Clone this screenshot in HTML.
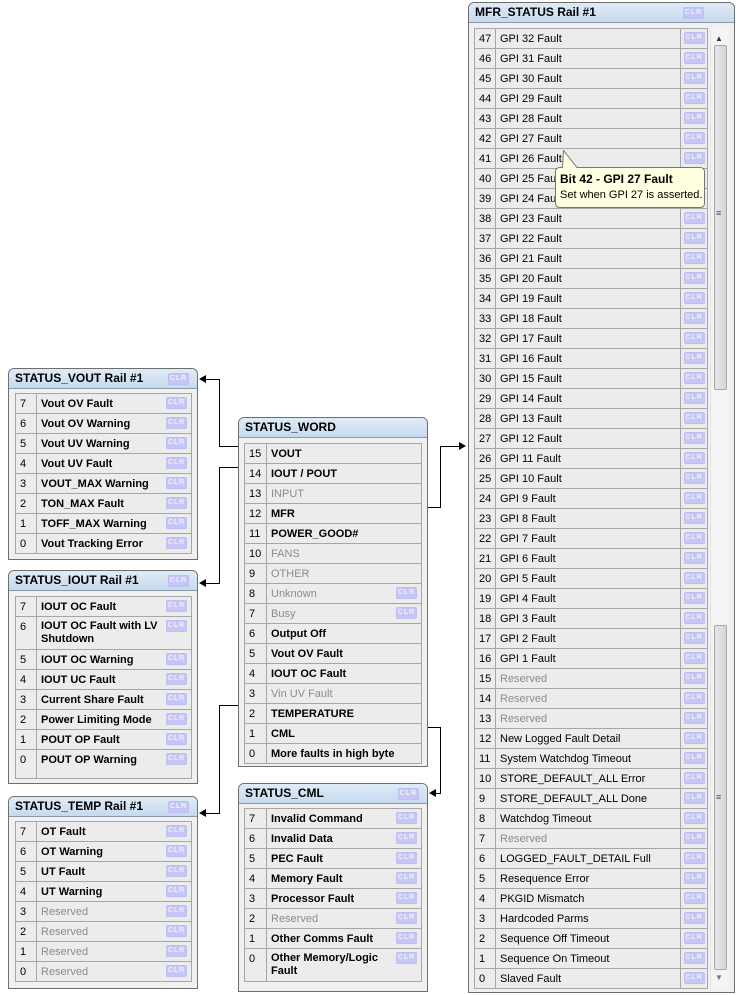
<!DOCTYPE html>
<html><head><meta charset="utf-8"><style>
*{box-sizing:border-box}
body{margin:0;width:739px;height:995px;background:#fff;position:relative;overflow:hidden;font-family:"Liberation Sans","DejaVu Sans",sans-serif;font-size:11px;color:#000}
.p{position:absolute;border:1px solid #6f6f6f;border-radius:6px 6px 0 0;background:#f0f0f0}
.h{height:20px;background:linear-gradient(#e0ebf7,#c6daee);border-bottom:1px solid #8c9aa8;border-radius:5px 5px 0 0;font-weight:bold;font-size:12px;line-height:19px;padding-left:6px;position:relative}
.h .c{position:absolute;right:8px;top:4px}
table{position:absolute;border-collapse:collapse;table-layout:fixed}
td{border:1px solid #a6a6a6;background:#ececec;padding:1px 0 0 4px;height:20px;line-height:18px;vertical-align:top;white-space:nowrap}
td.t{white-space:normal;font-weight:bold}
td.g{color:#8c8c8c;font-weight:normal}
.c{display:inline-block;width:21px;height:12px;background:#c6c6f4;border:1px solid #c0c0f0;border-radius:2px;color:#f0f0ff;font-size:7px;font-weight:bold;line-height:10px;text-align:center;letter-spacing:1px;vertical-align:top}
td.t .c{float:right;margin:2px 4px 0 2px}
.l{position:absolute;background:#000}
.ar{position:absolute;width:0;height:0;border-top:4px solid transparent;border-bottom:4px solid transparent}
.mt td{font-weight:normal}
.mt td.k{padding:0;text-align:center}
.mt td.k .c{margin-top:3px}
</style></head><body>

<!-- STATUS_VOUT -->
<div class="p" style="left:8px;top:368px;width:190px;height:192px">
<div class="h">STATUS_VOUT Rail #1<span class="c">CLR</span></div>
<table style="left:6px;top:24px;width:177px"><colgroup><col style="width:21px"><col></colgroup>
<tr><td>7</td><td class="t"><span class="c">CLR</span>Vout OV Fault</td></tr>
<tr><td>6</td><td class="t"><span class="c">CLR</span>Vout OV Warning</td></tr>
<tr><td>5</td><td class="t"><span class="c">CLR</span>Vout UV Warning</td></tr>
<tr><td>4</td><td class="t"><span class="c">CLR</span>Vout UV Fault</td></tr>
<tr><td>3</td><td class="t"><span class="c">CLR</span>VOUT_MAX Warning</td></tr>
<tr><td>2</td><td class="t"><span class="c">CLR</span>TON_MAX Fault</td></tr>
<tr><td>1</td><td class="t"><span class="c">CLR</span>TOFF_MAX Warning</td></tr>
<tr><td>0</td><td class="t"><span class="c">CLR</span>Vout Tracking Error</td></tr>
</table></div>

<!-- STATUS_IOUT -->
<div class="p" style="left:8px;top:570px;width:190px;height:214px">
<div class="h">STATUS_IOUT Rail #1<span class="c">CLR</span></div>
<table style="left:6px;top:25px;width:177px"><colgroup><col style="width:21px"><col></colgroup>
<tr><td>7</td><td class="t"><span class="c">CLR</span>IOUT OC Fault</td></tr>
<tr><td style="height:33px">6</td><td class="t" style="line-height:13px;padding-top:3px"><span class="c" style="margin-top:0">CLR</span>IOUT OC Fault with LV Shutdown</td></tr>
<tr><td>5</td><td class="t"><span class="c">CLR</span>IOUT OC Warning</td></tr>
<tr><td>4</td><td class="t"><span class="c">CLR</span>IOUT UC Fault</td></tr>
<tr><td>3</td><td class="t"><span class="c">CLR</span>Current Share Fault</td></tr>
<tr><td>2</td><td class="t"><span class="c">CLR</span>Power Limiting Mode</td></tr>
<tr><td>1</td><td class="t"><span class="c">CLR</span>POUT OP Fault</td></tr>
<tr><td style="height:29px">0</td><td class="t"><span class="c">CLR</span>POUT OP Warning</td></tr>
</table></div>

<!-- STATUS_TEMP -->
<div class="p" style="left:8px;top:796px;width:190px;height:193px">
<div class="h">STATUS_TEMP Rail #1<span class="c">CLR</span></div>
<table style="left:6px;top:24px;width:177px"><colgroup><col style="width:21px"><col></colgroup>
<tr><td>7</td><td class="t"><span class="c">CLR</span>OT Fault</td></tr>
<tr><td>6</td><td class="t"><span class="c">CLR</span>OT Warning</td></tr>
<tr><td>5</td><td class="t"><span class="c">CLR</span>UT Fault</td></tr>
<tr><td>4</td><td class="t"><span class="c">CLR</span>UT Warning</td></tr>
<tr><td>3</td><td class="t g"><span class="c">CLR</span>Reserved</td></tr>
<tr><td>2</td><td class="t g"><span class="c">CLR</span>Reserved</td></tr>
<tr><td>1</td><td class="t g"><span class="c">CLR</span>Reserved</td></tr>
<tr><td>0</td><td class="t g"><span class="c">CLR</span>Reserved</td></tr>
</table></div>

<!-- STATUS_WORD -->
<div class="p" style="left:238px;top:417px;width:190px;height:350px">
<div class="h">STATUS_WORD</div>
<table style="left:5px;top:25px;width:178px"><colgroup><col style="width:22px"><col></colgroup>
<tr><td>15</td><td class="t">VOUT</td></tr>
<tr><td>14</td><td class="t">IOUT / POUT</td></tr>
<tr><td>13</td><td class="t g">INPUT</td></tr>
<tr><td>12</td><td class="t">MFR</td></tr>
<tr><td>11</td><td class="t">POWER_GOOD#</td></tr>
<tr><td>10</td><td class="t g">FANS</td></tr>
<tr><td>9</td><td class="t g">OTHER</td></tr>
<tr><td>8</td><td class="t g"><span class="c">CLR</span>Unknown</td></tr>
<tr><td>7</td><td class="t g"><span class="c">CLR</span>Busy</td></tr>
<tr><td>6</td><td class="t">Output Off</td></tr>
<tr><td>5</td><td class="t">Vout OV Fault</td></tr>
<tr><td>4</td><td class="t">IOUT OC Fault</td></tr>
<tr><td>3</td><td class="t g">Vin UV Fault</td></tr>
<tr><td>2</td><td class="t">TEMPERATURE</td></tr>
<tr><td>1</td><td class="t">CML</td></tr>
<tr><td>0</td><td class="t">More faults in high byte</td></tr>
</table></div>

<!-- STATUS_CML -->
<div class="p" style="left:238px;top:783px;width:190px;height:209px">
<div class="h">STATUS_CML<span class="c">CLR</span></div>
<table style="left:5px;top:24px;width:178px"><colgroup><col style="width:22px"><col></colgroup>
<tr><td>7</td><td class="t"><span class="c">CLR</span>Invalid Command</td></tr>
<tr><td>6</td><td class="t"><span class="c">CLR</span>Invalid Data</td></tr>
<tr><td>5</td><td class="t"><span class="c">CLR</span>PEC Fault</td></tr>
<tr><td>4</td><td class="t"><span class="c">CLR</span>Memory Fault</td></tr>
<tr><td>3</td><td class="t"><span class="c">CLR</span>Processor Fault</td></tr>
<tr><td>2</td><td class="t g"><span class="c">CLR</span>Reserved</td></tr>
<tr><td>1</td><td class="t"><span class="c">CLR</span>Other Comms Fault</td></tr>
<tr><td style="height:33px">0</td><td class="t" style="line-height:13px;padding-top:3px"><span class="c" style="margin-top:0">CLR</span>Other Memory/Logic Fault</td></tr>
</table></div>

<!-- MFR_STATUS -->
<div class="p" style="left:468px;top:2px;width:267px;height:991px">
<div class="h">MFR_STATUS Rail #1<span class="c" style="right:30px">CLR</span></div>
<table class="mt" style="left:5px;top:25px;width:234px"><colgroup><col style="width:21px"><col><col style="width:27px"></colgroup>
<tr><td>47</td><td>GPI 32 Fault</td><td class="k"><span class="c">CLR</span></td></tr>
<tr><td>46</td><td>GPI 31 Fault</td><td class="k"><span class="c">CLR</span></td></tr>
<tr><td>45</td><td>GPI 30 Fault</td><td class="k"><span class="c">CLR</span></td></tr>
<tr><td>44</td><td>GPI 29 Fault</td><td class="k"><span class="c">CLR</span></td></tr>
<tr><td>43</td><td>GPI 28 Fault</td><td class="k"><span class="c">CLR</span></td></tr>
<tr><td>42</td><td>GPI 27 Fault</td><td class="k"><span class="c">CLR</span></td></tr>
<tr><td>41</td><td>GPI 26 Fault</td><td class="k"><span class="c">CLR</span></td></tr>
<tr><td>40</td><td>GPI 25 Fault</td><td class="k"><span class="c">CLR</span></td></tr>
<tr><td>39</td><td>GPI 24 Fault</td><td class="k"><span class="c">CLR</span></td></tr>
<tr><td>38</td><td>GPI 23 Fault</td><td class="k"><span class="c">CLR</span></td></tr>
<tr><td>37</td><td>GPI 22 Fault</td><td class="k"><span class="c">CLR</span></td></tr>
<tr><td>36</td><td>GPI 21 Fault</td><td class="k"><span class="c">CLR</span></td></tr>
<tr><td>35</td><td>GPI 20 Fault</td><td class="k"><span class="c">CLR</span></td></tr>
<tr><td>34</td><td>GPI 19 Fault</td><td class="k"><span class="c">CLR</span></td></tr>
<tr><td>33</td><td>GPI 18 Fault</td><td class="k"><span class="c">CLR</span></td></tr>
<tr><td>32</td><td>GPI 17 Fault</td><td class="k"><span class="c">CLR</span></td></tr>
<tr><td>31</td><td>GPI 16 Fault</td><td class="k"><span class="c">CLR</span></td></tr>
<tr><td>30</td><td>GPI 15 Fault</td><td class="k"><span class="c">CLR</span></td></tr>
<tr><td>29</td><td>GPI 14 Fault</td><td class="k"><span class="c">CLR</span></td></tr>
<tr><td>28</td><td>GPI 13 Fault</td><td class="k"><span class="c">CLR</span></td></tr>
<tr><td>27</td><td>GPI 12 Fault</td><td class="k"><span class="c">CLR</span></td></tr>
<tr><td>26</td><td>GPI 11 Fault</td><td class="k"><span class="c">CLR</span></td></tr>
<tr><td>25</td><td>GPI 10 Fault</td><td class="k"><span class="c">CLR</span></td></tr>
<tr><td>24</td><td>GPI 9 Fault</td><td class="k"><span class="c">CLR</span></td></tr>
<tr><td>23</td><td>GPI 8 Fault</td><td class="k"><span class="c">CLR</span></td></tr>
<tr><td>22</td><td>GPI 7 Fault</td><td class="k"><span class="c">CLR</span></td></tr>
<tr><td>21</td><td>GPI 6 Fault</td><td class="k"><span class="c">CLR</span></td></tr>
<tr><td>20</td><td>GPI 5 Fault</td><td class="k"><span class="c">CLR</span></td></tr>
<tr><td>19</td><td>GPI 4 Fault</td><td class="k"><span class="c">CLR</span></td></tr>
<tr><td>18</td><td>GPI 3 Fault</td><td class="k"><span class="c">CLR</span></td></tr>
<tr><td>17</td><td>GPI 2 Fault</td><td class="k"><span class="c">CLR</span></td></tr>
<tr><td>16</td><td>GPI 1 Fault</td><td class="k"><span class="c">CLR</span></td></tr>
<tr><td>15</td><td class="g">Reserved</td><td class="k"><span class="c">CLR</span></td></tr>
<tr><td>14</td><td class="g">Reserved</td><td class="k"><span class="c">CLR</span></td></tr>
<tr><td>13</td><td class="g">Reserved</td><td class="k"><span class="c">CLR</span></td></tr>
<tr><td>12</td><td>New Logged Fault Detail</td><td class="k"><span class="c">CLR</span></td></tr>
<tr><td>11</td><td>System Watchdog Timeout</td><td class="k"><span class="c">CLR</span></td></tr>
<tr><td>10</td><td>STORE_DEFAULT_ALL Error</td><td class="k"><span class="c">CLR</span></td></tr>
<tr><td>9</td><td>STORE_DEFAULT_ALL Done</td><td class="k"><span class="c">CLR</span></td></tr>
<tr><td>8</td><td>Watchdog Timeout</td><td class="k"><span class="c">CLR</span></td></tr>
<tr><td>7</td><td class="g">Reserved</td><td class="k"><span class="c">CLR</span></td></tr>
<tr><td>6</td><td>LOGGED_FAULT_DETAIL Full</td><td class="k"><span class="c">CLR</span></td></tr>
<tr><td>5</td><td>Resequence Error</td><td class="k"><span class="c">CLR</span></td></tr>
<tr><td>4</td><td>PKGID Mismatch</td><td class="k"><span class="c">CLR</span></td></tr>
<tr><td>3</td><td>Hardcoded Parms</td><td class="k"><span class="c">CLR</span></td></tr>
<tr><td>2</td><td>Sequence Off Timeout</td><td class="k"><span class="c">CLR</span></td></tr>
<tr><td>1</td><td>Sequence On Timeout</td><td class="k"><span class="c">CLR</span></td></tr>
<tr><td>0</td><td>Slaved Fault</td><td class="k"><span class="c">CLR</span></td></tr>
</table>
</div>

<!-- scrollbar -->
<div style="position:absolute;left:710px;top:27px;width:19px;height:962px;background:#f4f4f4;border-left:1px solid #e4e4e4">
<div style="position:absolute;left:4px;top:7px;font-size:8px;color:#333">&#9650;</div>
<div style="position:absolute;left:3px;top:18px;width:13px;height:345px;background:linear-gradient(90deg,#e6e6e6,#d6d6d6);border:1px solid #a8a8a8;border-radius:2px"></div>
<div style="position:absolute;left:5px;top:184px;font-size:9px;color:#555;line-height:4px">&#8801;</div>
<div style="position:absolute;left:3px;top:598px;width:13px;height:345px;background:linear-gradient(90deg,#e6e6e6,#d6d6d6);border:1px solid #a8a8a8;border-radius:2px"></div>
<div style="position:absolute;left:5px;top:768px;font-size:9px;color:#555;line-height:4px">&#8801;</div>
<div style="position:absolute;left:4px;top:946px;font-size:8px;color:#777">&#9660;</div>
</div>

<!-- tooltip -->
<svg style="position:absolute;left:553px;top:150px" width="156" height="60">
<path d="M9.5 17.5 L10.5 0.5 L24 17.5 H147 Q151.5 17.5 151.5 22 V53 Q151.5 57.5 147 57.5 H7 Q2.5 57.5 2.5 53 V22 Q2.5 17.5 7 17.5 Z" fill="#ffffe1" stroke="#767676"/>
</svg>
<div style="position:absolute;left:560px;top:172px;font-weight:bold;font-size:12px">Bit 42 - GPI 27 Fault</div>
<div style="position:absolute;left:560px;top:189px;font-size:11px">Set when GPI 27 is asserted.</div>

<!-- connector lines -->
<div class="l" style="left:219px;top:446px;width:19px;height:1px"></div>
<div class="l" style="left:219px;top:379px;width:1px;height:68px"></div>
<div class="l" style="left:205px;top:379px;width:15px;height:1px"></div>
<div class="ar" style="left:199px;top:375px;border-right:7px solid #000"></div>

<div class="l" style="left:219px;top:467px;width:19px;height:1px"></div>
<div class="l" style="left:219px;top:467px;width:1px;height:117px"></div>
<div class="l" style="left:205px;top:583px;width:15px;height:1px"></div>
<div class="ar" style="left:199px;top:579px;border-right:7px solid #000"></div>

<div class="l" style="left:219px;top:705px;width:19px;height:1px"></div>
<div class="l" style="left:219px;top:705px;width:1px;height:109px"></div>
<div class="l" style="left:205px;top:813px;width:15px;height:1px"></div>
<div class="ar" style="left:199px;top:809px;border-right:7px solid #000"></div>

<div class="l" style="left:428px;top:507px;width:13px;height:1px"></div>
<div class="l" style="left:440px;top:446px;width:1px;height:62px"></div>
<div class="l" style="left:440px;top:446px;width:20px;height:1px"></div>
<div class="ar" style="left:459px;top:442px;border-left:7px solid #000"></div>

<div class="l" style="left:428px;top:727px;width:13px;height:1px"></div>
<div class="l" style="left:440px;top:727px;width:1px;height:67px"></div>
<div class="l" style="left:435px;top:793px;width:6px;height:1px"></div>
<div class="ar" style="left:429px;top:789px;border-right:7px solid #000"></div>
</body></html>
